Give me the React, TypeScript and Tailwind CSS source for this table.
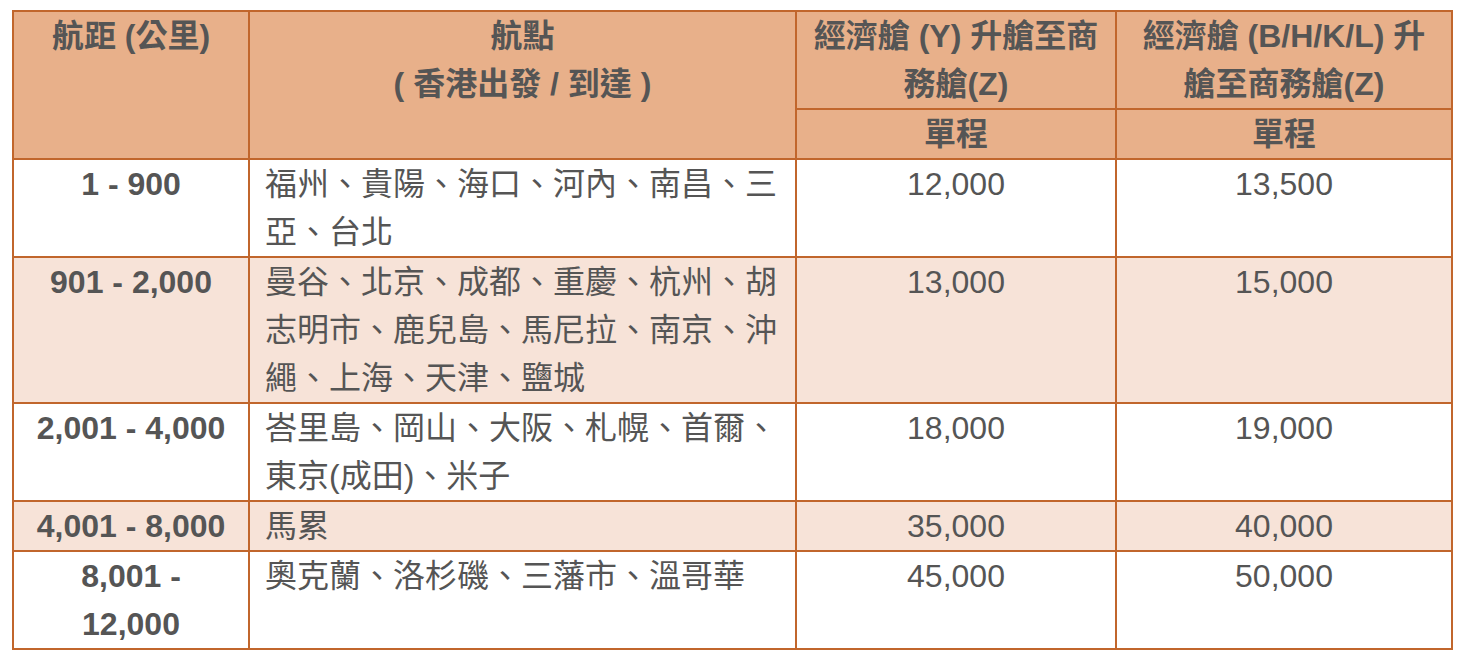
const rows = [
  {
    range: ['1 - 900'],
    cities: ['福州、貴陽、海口、河內、南昌、三', '亞、台北'],
    y: '12,000',
    b: '13,500',
    alt: false,
  },
  {
    range: ['901 - 2,000'],
    cities: ['曼谷、北京、成都、重慶、杭州、胡', '志明市、鹿兒島、馬尼拉、南京、沖', '繩、上海、天津、鹽城'],
    y: '13,000',
    b: '15,000',
    alt: true,
  },
  {
    range: ['2,001 - 4,000'],
    cities: ['峇里島、岡山、大阪、札幌、首爾、', '東京(成田)、米子'],
    y: '18,000',
    b: '19,000',
    alt: false,
  },
  {
    range: ['4,001 - 8,000'],
    cities: ['馬累'],
    y: '35,000',
    b: '40,000',
    alt: true,
  },
  {
    range: ['8,001 -', '12,000'],
    cities: ['奧克蘭、洛杉磯、三藩市、溫哥華'],
    y: '45,000',
    b: '50,000',
    alt: false,
  },
];

function Lines({ items }: { items: string[] }) {
  return (
    <>
      {items.map((t, i) => (
        <span key={i} className="block">
          {t}
        </span>
      ))}
    </>
  );
}

export default function App() {
  const cell = 'border-2 border-[#c1662c] align-top p-0';
  const head = 'bg-[#e8b08a] font-bold text-center';

  return (
    <div className="min-h-screen bg-white pt-[10px] pl-[12px] text-[#555555] font-['Liberation_Sans','Noto_Sans_CJK_TC',sans-serif] text-[32px] leading-[48px]">
      <table className="table-fixed border-collapse w-[1441px]">
        <colgroup>
          <col className="w-[236px]" />
          <col className="w-[547px]" />
          <col className="w-[320px]" />
          <col className="w-[336px]" />
        </colgroup>
        <thead>
          <tr>
            <th rowSpan={2} className={`${cell} ${head}`}>
              航距 (公里)
            </th>
            <th rowSpan={2} className={`${cell} ${head}`}>
              <Lines items={['航點', '( 香港出發 / 到達 )']} />
            </th>
            <th className={`${cell} ${head}`}>
              <Lines items={['經濟艙 (Y) 升艙至商', '務艙(Z)']} />
            </th>
            <th className={`${cell} ${head}`}>
              <Lines items={['經濟艙 (B/H/K/L) 升', '艙至商務艙(Z)']} />
            </th>
          </tr>
          <tr>
            <th className={`${cell} ${head}`}>單程</th>
            <th className={`${cell} ${head}`}>單程</th>
          </tr>
        </thead>
        <tbody>
          {rows.map((r) => (
            <tr key={r.range.join('')} className={r.alt ? 'bg-[#f7e3d8]' : 'bg-white'}>
              <td className={`${cell} font-bold text-center`}>
                <Lines items={r.range} />
              </td>
              <td className={`${cell} px-[15px]`}>
                <Lines items={r.cities} />
              </td>
              <td className={`${cell} text-center`}>{r.y}</td>
              <td className={`${cell} text-center`}>{r.b}</td>
            </tr>
          ))}
        </tbody>
      </table>
    </div>
  );
}
